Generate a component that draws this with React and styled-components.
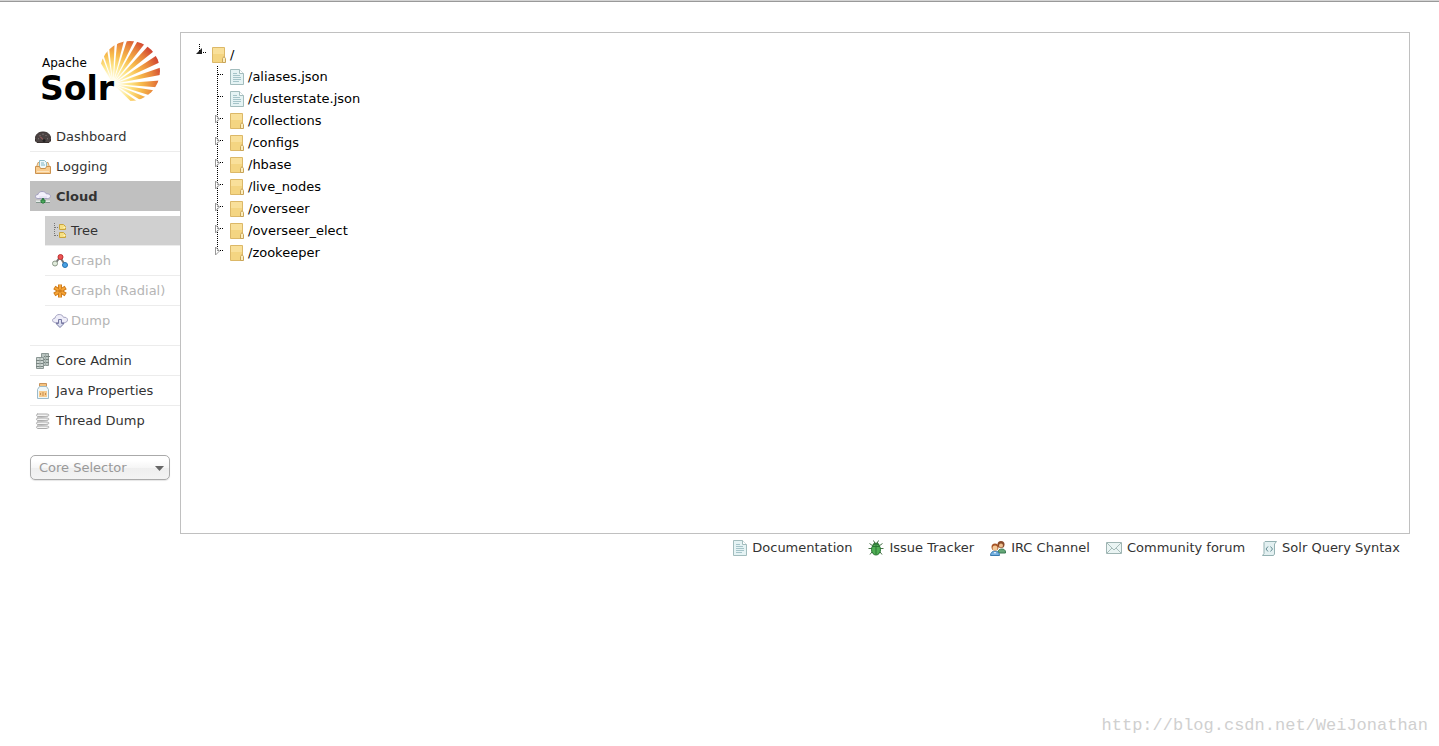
import React from 'react'
import styled, { createGlobalStyle, ThemeProvider } from 'styled-components'

const theme = {
  text: '#333',
  disabled: '#b5b5b5',
  border: '#c0c0c0',
  line: '#ececec',
  active: '#c0c0c0',
  subActive: '#d0d0d0',
  font: "'DejaVu Sans', Verdana, sans-serif",
}

const GlobalStyle = createGlobalStyle`
  * {
    box-sizing: border-box;
  }

  body {
    margin: 0;
    background: #fff;
    color: ${theme.text};
    font-family: ${theme.font};
    font-size: 13px;
    line-height: 22px;
  }

  ul {
    list-style: none;
    margin: 0;
    padding: 0;
  }

  svg {
    display: block;
    flex: none;
  }
`

const Page = styled.div`
  display: flex;
  flex-direction: column;
  min-height: 100vh;
  border-top: 1px solid #d4d4d4;
  box-shadow: inset 0 1px #999;
`

const Main = styled.div`
  display: flex;
  padding: 31px 29px 0 30px;
`

const Sidebar = styled.aside`
  width: 150px;
  flex: none;
`

const LogoLink = styled.a`
  display: block;
  height: 90px;
  padding: 4px 0 0 10px;
`

const MenuItem = styled.li`
  &:not(:first-child) {
    border-top: 1px solid ${props => props.$active ? props.theme.active : props.theme.line};
  }
`

const MenuLink = styled.a`
  display: flex;
  align-items: center;
  gap: 5px;
  height: 29px;
  padding-left: 5px;
  color: ${props => props.theme.text};
  background: ${props => props.$active ? props.theme.active : 'transparent'};
  font-weight: ${props => props.$active ? 'bold' : 'normal'};
  text-decoration: none;
`

const SubMenu = styled.ul`
  padding: 5px 0 10px 15px;
`

const SubLink = styled(MenuLink)`
  gap: 3px;
  padding-left: 7px;
  font-weight: normal;
  color: ${props => props.$active ? props.theme.text : props.theme.disabled};
  background: ${props => props.$active ? props.theme.subActive : 'transparent'};
`

const Selector = styled.label`
  position: relative;
  display: block;
  width: 140px;
  margin-top: 20px;

  svg {
    position: absolute;
    top: 11px;
    right: 6px;
    pointer-events: none;
  }
`

const Select = styled.select`
  appearance: none;
  display: block;
  width: 100%;
  height: 25px;
  padding: 0 24px 0 8px;
  border: 1px solid #aaa;
  border-radius: 5px;
  background: linear-gradient(#fff 20%, #f6f6f6 50%, #eee 52%, #f4f4f4 100%);
  box-shadow: 0 1px 1px rgba(0, 0, 0, 0.1);
  color: #999;
  font-family: inherit;
  font-size: 13px;
`

const Body = styled.div`
  flex: 1;
  min-width: 0;
`

const Content = styled.main`
  min-height: 502px;
  padding: 11px 13px;
  border: 1px solid ${props => props.theme.border};
`

const TreeRow = styled.div`
  display: flex;
  align-items: center;
  height: 22px;
`

const Toggle = styled.button`
  width: 18px;
  height: 22px;
  padding: 0;
  border: 0;
  background: none;
`

const Stub = styled.span`
  width: 18px;
  height: 22px;
`

const TreeLink = styled.a`
  display: flex;
  align-items: center;
  gap: 4px;
  color: #000;
  text-decoration: none;
`

const Branch = styled.ul`
  padding-left: 18px;
`

const Footer = styled.footer`
  display: flex;
  flex-wrap: wrap;
  justify-content: flex-end;
  gap: 16px;
  padding: 3px 10px 0;
`

const FooterLink = styled.a`
  display: flex;
  align-items: center;
  gap: 5px;
  color: ${props => props.theme.text};
  text-decoration: none;
`

const Watermark = styled.div`
  margin-top: auto;
  padding: 0 11px 9px 0;
  color: #d0d0d0;
  font-family: 'Liberation Mono', monospace;
  font-size: 17px;
  text-align: right;
`

const LogoText = styled.text`
  font-family: 'DejaVu Sans', sans-serif;
  font-size: ${props => props.$size}px;
  font-weight: ${props => props.$bold ? 'bold' : 'normal'};
  fill: #000;
`

// angle of each ray in degrees, clockwise from pointing right
const rays = [-116, -104, -92, -80, -68, -56, -43, -29, -15, 0, 13, 26, 40]

const rayPoints = angle => {
  const point = a => {
    const rad = a * Math.PI / 180
    return `${73 + 80 * Math.cos(rad)},${48 + 80 * Math.sin(rad)}`
  }
  return `73,48 ${point(angle - 4.2)} ${point(angle + 4.2)}`
}

const Logo = () => (
  <svg width="124" height="80" viewBox="0 0 124 80" role="img" aria-label="Apache Solr">
    <defs>
      <radialGradient id="sun" gradientUnits="userSpaceOnUse" cx="70" cy="50" r="58">
        <stop offset="0.15" stopColor="#fffbe0" />
        <stop offset="0.35" stopColor="#fde486" />
        <stop offset="0.55" stopColor="#f7b94a" />
        <stop offset="0.75" stopColor="#e8853c" />
        <stop offset="0.95" stopColor="#d04030" />
      </radialGradient>
      <clipPath id="disc">
        <circle cx="90" cy="35" r="30" />
      </clipPath>
    </defs>
    <g clipPath="url(#disc)">
      {rays.map(angle => <polygon key={angle} points={rayPoints(angle)} fill="url(#sun)" />)}
    </g>
    <LogoText x="2" y="31" $size={12}>Apache</LogoText>
    <LogoText x="0" y="64" $size={33} $bold>Solr</LogoText>
  </svg>
)

const Icon = ({ children, width = 16 }) => (
  <svg width={width} height="16" viewBox={`0 0 ${width} 16`} aria-hidden="true">{children}</svg>
)

const DashboardIcon = () => (
  <Icon>
    <path d="M.5 9.500C.5 5.500 3.500 3 8 3s7.500 2.500 7.500 6.500V12L14 13.500H2L.5 12z" fill="#4b4343" stroke="#38302f" />
    <path d="M3 9.500l1 .5M4.500 6l1 1M8 4.500V6M11.500 6l-1 1M13 9.500l-1 .5" stroke="#857b7b" />
    <path d="M5 7.500l4 4" stroke="#b66" />
    <circle cx="9" cy="11.500" r="1.500" fill="#222" />
  </Icon>
)

const LoggingIcon = () => (
  <Icon>
    <path d="M1.500 8L3 3.500h10L14.500 8" fill="#f9dfb6" stroke="#d2a36b" />
    <path d="M4.500 1.500h5l2 2V10h-7z" fill="#eef8fb" stroke="#8ebdc9" />
    <path d="M6 4h3M6 6h4" stroke="#7eb4c4" />
    <path d="M.5 7.500h4l1 2h5l1-2h4v7H.5z" fill="#f9cc8e" stroke="#cb924f" />
    <path d="M2 12.500h12" stroke="#fbe5c2" />
  </Icon>
)

const CloudIcon = () => (
  <Icon>
    <path d="M3 9.500C1.500 9.500.5 8.800.5 7.500S1.500 5.500 3 5.500C3.500 3.500 5 2.500 7 2.500s3.700.8 4.300 2.300c2.400-.3 4.200.8 4.200 2.400 0 1.500-1.200 2.300-3 2.300z" fill="#f3f1fb" stroke="#a3a0bf" />
    <path d="M4 8h8" stroke="#dcd9ee" />
    <path d="M1 12.500h14" stroke="#e4ece8" strokeWidth="2" />
    <path d="M1 13.500h14" stroke="#84978e" />
    <path d="M8 9v3" stroke="#327d48" strokeWidth="2" />
    <path d="M6 11h4v2l-1 1H7l-1-1z" fill="#4eaa5d" stroke="#277a3c" />
  </Icon>
)

const TreeIcon = () => (
  <Icon>
    <path d="M2.500 0v13M3 4.500h3M3 12.500h3" fill="none" stroke="#777" strokeDasharray="1 1" />
    <path d="M7.500 1.500h4l2 2v3h-6zM7.500 9.500h4l2 2v3h-6z" fill="#f6df83" stroke="#c9a43e" />
    <path d="M11.500 4.500h2M11.500 12.500h2" stroke="#fff4bc" />
  </Icon>
)

const GraphIcon = () => (
  <Icon>
    <path d="M3 11l5-7 5 8" fill="none" stroke="#777" strokeWidth="2" />
    <circle cx="8.500" cy="4" r="2.500" fill="#ec5555" stroke="#bf3030" />
    <circle cx="3" cy="10.500" r="2.500" fill="#e0ebdc" stroke="#8c9988" />
    <circle cx="13" cy="12" r="2.500" fill="#4aa2e4" stroke="#2674b4" />
  </Icon>
)

const RadialIcon = () => (
  <Icon>
    <path d="M8 3.500v9M4 5.500l8 5M12 5.500l-8 5" stroke="#d07d1c" strokeWidth="4" strokeLinecap="square" />
    <path d="M8 3v10M4 5.500l8 5M12 5.500l-8 5" stroke="#f7a638" strokeWidth="2" strokeLinecap="square" />
    <path d="M8 6v4M6 7l4 2M10 7L6 9" stroke="#d07d1c" />
  </Icon>
)

const DumpIcon = () => (
  <Icon>
    <path d="M3.500 9.500C1.500 9.500.5 8.500.5 7.300S1.700 5.200 3 5.200C3.300 3 5 1.500 7.200 1.500S11 2.700 11.500 4.300c2.300-.4 4 .8 4 2.500s-1.200 2.700-3 2.700z" fill="#eeedf8" stroke="#a5a3c2" />
    <path d="M6.500 6.500h3v4H12l-4 4-4-4h2.500z" fill="#dcdff0" stroke="#7779a3" />
  </Icon>
)

const CoreIcon = () => (
  <Icon>
    <path d="M6.500.5h7v12h-7z" fill="#b9c4c0" stroke="#8b9794" />
    <path d="M1.500 4.500h7v11h-7z" fill="#ccd4d1" stroke="#8b9794" />
    <path d="M9 3.500h6M9 6.500h5M9 9.500h5M1 7.500h7M1 10.500h7M1 13.500h7" stroke="#77837f" />
    <path d="M10.500 1v12M5 5v10" stroke="#a1ada9" />
  </Icon>
)

const JavaIcon = () => (
  <Icon>
    <path d="M4.500.5h7v3h-7z" fill="#f4c27e" stroke="#c8935b" />
    <path d="M4.500 3.500h7l2 3v9h-11v-9z" fill="#eef7fa" stroke="#9dbbc9" />
    <path d="M4 8h8v6H4z" fill="#f6cb8e" />
    <path d="M5.500 12v-2M8 13V9M10.500 12v-2" stroke="#c9904e" />
  </Icon>
)

const ThreadIcon = () => (
  <Icon>
    {[1, 5, 9, 13].map(y => (
      <path key={y} d={`M2 ${y}h9c4 0 4 2 0 2.500H3c-2 0-2-2.500 0-2.500`} fill="#f3f3f3" stroke="#ababab" />
    ))}
    <path d="M13 3.500L3 5M13 7.500L3 9M13 11.500L3 13" stroke="#bdbdbd" />
  </Icon>
)

const FolderIcon = () => (
  <Icon width={14}>
    <path d="M.5.5h12v15H.5z" fill="#f4d582" stroke="#dcb868" />
    <path d="M1 1h11v6H1z" fill="#f9e09a" />
    <path d="M10.500 15.500v-4l1.500-2 1.500 2v4z" fill="#fbedbe" stroke="#c9a458" />
  </Icon>
)

const FileIcon = () => (
  <Icon width={14}>
    <path d="M.5.5h9l4 4v11H.5z" fill="#e5f3f4" stroke="#a2bcbd" />
    <path d="M9.500.5v4h4" fill="#fff" stroke="#a2bcbd" />
    <path d="M3 4.500h4M3 6.500h7M3 8.500h8M3 10.500h8M3 12.500h6" stroke="#a5c4c9" />
  </Icon>
)

const BugIcon = () => (
  <Icon>
    <path d="M1.500 3.500L5 6M14.500 3.500L11 6M.5 8.500h15M2 14.500l3-4M14 14.500l-3-4M5.500.5l1.500 3M10.500.5L9 3.500" fill="none" stroke="#487348" />
    <path d="M4.500 5C4.500 1.500 11.500 1.500 11.500 5z" fill="#3d7a42" />
    <ellipse cx="8" cy="9.500" rx="4.500" ry="5.500" fill="#4fae54" stroke="#287332" />
    <path d="M8 5v9M4 6.500h8" stroke="#2a7733" />
  </Icon>
)

const PeopleIcon = () => (
  <Icon>
    <path d="M8 12c0-4 7.500-4 7.500 0v1H8z" fill="#65a878" stroke="#397850" />
    <circle cx="11" cy="4.500" r="3.500" fill="#8a4b2b" />
    <circle cx="11" cy="5.500" r="2" fill="#efc090" />
    <path d="M.5 15.500c0-6 9-6 9 0z" fill="#75b1e1" stroke="#397bb0" />
    <circle cx="5" cy="7" r="3.500" fill="#a65527" />
    <circle cx="5" cy="8" r="2.500" fill="#f4c897" />
    <path d="M4 12l1 2 1-2z" fill="#fff" />
  </Icon>
)

const MailIcon = () => (
  <Icon>
    <path d="M.5 2.500h15v11H.5z" fill="#eaf4f3" stroke="#9fb5b3" />
    <path d="M1 3l7 7 7-7M1 13l5-5M15 13l-5-5" fill="none" stroke="#a5bbb9" />
  </Icon>
)

const ScriptIcon = () => (
  <Icon>
    <path d="M4 1.500h11.500L13.500 4v10l-1 1.500H1.500L3 13.500V2.500z" fill="#e3f0f1" stroke="#94b1b2" />
    <path d="M7 6.500l-2 2.500 2 2.500M9.500 6.500l2 2.500-2 2.500" fill="none" stroke="#628b92" />
  </Icon>
)

const RootToggle = () => (
  <svg width="18" height="22" viewBox="0 0 18 22" aria-hidden="true">
    <path d="M5.500 0v8M9 8.500h4" stroke="#000" strokeDasharray="1 1" />
    <path d="M8 4v6H2z" fill="#222" />
  </svg>
)

const BranchLines = ({ closed, last }) => (
  <svg width="18" height="22" viewBox="0 0 18 22" aria-hidden="true">
    <path d={`M5.500 0v${last ? 10 : 22}M6 8.500h6`} stroke="#000" strokeDasharray="1 1" />
    {closed && <path d="M3.500 5v8l4-4z" fill="#fff" fillOpacity="0.6" stroke="#999" />}
  </svg>
)

const menu = [
  { label: 'Dashboard', icon: DashboardIcon },
  { label: 'Logging', icon: LoggingIcon },
  {
    label: 'Cloud',
    icon: CloudIcon,
    active: true,
    children: [
      { label: 'Tree', icon: TreeIcon, active: true },
      { label: 'Graph', icon: GraphIcon },
      { label: 'Graph (Radial)', icon: RadialIcon },
      { label: 'Dump', icon: DumpIcon },
    ],
  },
  { label: 'Core Admin', icon: CoreIcon },
  { label: 'Java Properties', icon: JavaIcon },
  { label: 'Thread Dump', icon: ThreadIcon },
]

const nodes = [
  { name: '/aliases.json', file: true },
  { name: '/clusterstate.json', file: true },
  { name: '/collections' },
  { name: '/configs' },
  { name: '/hbase' },
  { name: '/live_nodes' },
  { name: '/overseer' },
  { name: '/overseer_elect' },
  { name: '/zookeeper' },
]

const links = [
  { label: 'Documentation', icon: FileIcon },
  { label: 'Issue Tracker', icon: BugIcon },
  { label: 'IRC Channel', icon: PeopleIcon },
  { label: 'Community forum', icon: MailIcon },
  { label: 'Solr Query Syntax', icon: ScriptIcon },
]

const Menu = () => (
  <ul>
    {menu.map(({ label, icon: ItemIcon, active, children }) => (
      <MenuItem key={label} $active={active}>
        <MenuLink href="#" $active={active}><ItemIcon />{label}</MenuLink>
        {children && (
          <SubMenu>
            {children.map(({ label, icon: SubIcon, active }) => (
              <MenuItem key={label}>
                <SubLink href="#" $active={active}><SubIcon />{label}</SubLink>
              </MenuItem>
            ))}
          </SubMenu>
        )}
      </MenuItem>
    ))}
  </ul>
)

const Tree = () => (
  <div>
    <TreeRow>
      <Toggle type="button" aria-label="Collapse /"><RootToggle /></Toggle>
      <TreeLink href="#"><FolderIcon />/</TreeLink>
    </TreeRow>
    <Branch>
      {nodes.map(({ name, file }, i) => (
        <li key={name}>
          <TreeRow>
            {file
              ? <Stub><BranchLines /></Stub>
              : <Toggle type="button" aria-label={`Expand ${name}`}><BranchLines closed last={i === nodes.length - 1} /></Toggle>}
            <TreeLink href="#">{file ? <FileIcon /> : <FolderIcon />}{name}</TreeLink>
          </TreeRow>
        </li>
      ))}
    </Branch>
  </div>
)

export default () => {
  return (
    <ThemeProvider theme={theme}>
      <GlobalStyle />
      <Page>
        <Main>
          <Sidebar>
            <LogoLink href="#"><Logo /></LogoLink>
            <Menu />
            <Selector>
              <Select aria-label="Core Selector" defaultValue="">
                <option value="">Core Selector</option>
              </Select>
              <svg width="9" height="6" viewBox="0 0 9 6" aria-hidden="true">
                <path d="M0 0h9L4.500 5z" fill="#666" />
              </svg>
            </Selector>
          </Sidebar>
          <Body>
            <Content>
              <Tree />
            </Content>
            <Footer>
              {links.map(({ label, icon: LinkIcon }) => (
                <FooterLink key={label} href="#"><LinkIcon />{label}</FooterLink>
              ))}
            </Footer>
          </Body>
        </Main>
        <Watermark>http://blog.csdn.net/WeiJonathan</Watermark>
      </Page>
    </ThemeProvider>
  )
}
